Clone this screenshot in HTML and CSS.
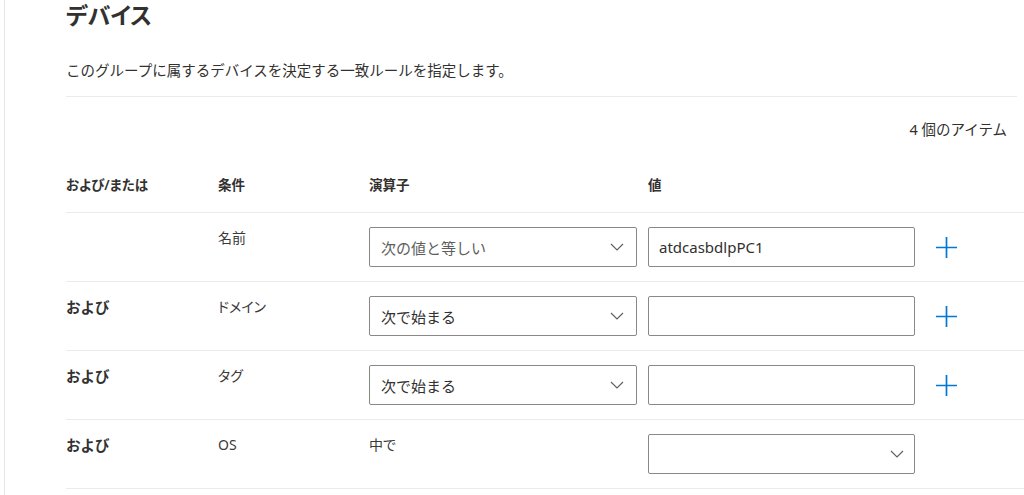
FILE: index.html
```html
<!DOCTYPE html>
<html lang="ja">
<head>
<meta charset="utf-8">
<title>デバイス</title>
<link rel="stylesheet" href="styles.css">
</head>
<body>
<div class="page">
  <h1 class="title">デバイス</h1>
  <p class="desc">このグループに属するデバイスを決定する一致ルールを指定します。</p>
  <div class="count">4 個のアイテム</div>
  <div class="table">
    <div class="row head">
      <div>および/または</div>
      <div>条件</div>
      <div>演算子</div>
      <div>値</div>
      <div></div>
    </div>
    <div class="row">
      <div class="andor"></div>
      <div class="label">名前</div>
      <div class="cell"><div class="select op placeholder"><span>次の値と等しい</span><svg class="chev" viewBox="0 0 14 8"><path d="M1 1 L7 7 L13 1"/></svg></div></div>
      <div class="cell"><div class="input">atdcasbdlpPC1</div></div>
      <div class="cell"><svg class="plus" viewBox="0 0 22 22"><path d="M11 0 V22 M0 11 H22"/></svg></div>
    </div>
    <div class="row">
      <div class="andor">および</div>
      <div class="label">ドメイン</div>
      <div class="cell"><div class="select op"><span>次で始まる</span><svg class="chev" viewBox="0 0 14 8"><path d="M1 1 L7 7 L13 1"/></svg></div></div>
      <div class="cell"><div class="input"></div></div>
      <div class="cell"><svg class="plus" viewBox="0 0 22 22"><path d="M11 0 V22 M0 11 H22"/></svg></div>
    </div>
    <div class="row">
      <div class="andor">および</div>
      <div class="label">タグ</div>
      <div class="cell"><div class="select op"><span>次で始まる</span><svg class="chev" viewBox="0 0 14 8"><path d="M1 1 L7 7 L13 1"/></svg></div></div>
      <div class="cell"><div class="input"></div></div>
      <div class="cell"><svg class="plus" viewBox="0 0 22 22"><path d="M11 0 V22 M0 11 H22"/></svg></div>
    </div>
    <div class="row">
      <div class="andor">および</div>
      <div class="label">OS</div>
      <div class="label">中で</div>
      <div class="cell"><div class="select val"><span></span><svg class="chev" viewBox="0 0 14 8"><path d="M1 1 L7 7 L13 1"/></svg></div></div>
      <div></div>
    </div>
  </div>
</div>
</body>
</html>
```

FILE: styles.css
```css
html, body {
  margin: 0;
  padding: 0;
  background: #ffffff;
}
body {
  font-family: "Noto Sans", "Noto Sans CJK JP", sans-serif;
  color: #323130;
  font-size: 14px;
  overflow: hidden;
}
.page {
  margin-left: 4px;
  border-left: 1px solid #e6e6e6;
  padding-left: 61px;
  padding-right: 7px;
  height: 495px;
  box-sizing: border-box;
}
.title {
  margin: 0;
  font-size: 23px;
  line-height: 30px;
  font-weight: 600;
  font-feature-settings: "palt";
  color: #323130;
}
.desc {
  margin: 30px 0 0;
  font-size: 14.5px;
  line-height: 20px;
  padding-bottom: 16px;
  border-bottom: 1px solid #edebe9;
  color: #323130;
}
.count {
  text-align: right;
  padding-right: 10px;
  margin-top: 22px;
  line-height: 20px;
  font-size: 14.5px;
}
.table {
  margin-top: 36px;
  margin-right: -7px;
}
.row {
  display: grid;
  grid-template-columns: 152px 151px 279px 288px 1fr;
  height: 69px;
  box-sizing: border-box;
  border-bottom: 1px solid #edebe9;
}
.row.head {
  height: 38px;
  font-weight: 600;
  line-height: 20px;
  font-size: 13.5px;
  font-feature-settings: "palt";
}
.andor {
  font-weight: 700;
  padding-top: 15px;
  line-height: 20px;
  font-size: 14.5px;
}
.label {
  padding-top: 15px;
  line-height: 20px;
  color: #3b3a39;
  font-feature-settings: "palt";
}
.cell {
  display: flex;
  align-items: center;
}
.select, .input {
  height: 40px;
  box-sizing: border-box;
  border: 1px solid #8a8886;
  border-radius: 2px;
  display: flex;
  align-items: center;
  font-size: 15px;
  color: #323130;
}
.select {
  justify-content: space-between;
  padding: 0 12px 0 11px;
}
.select.op { width: 268px; }
.select.val { width: 267px; padding-right: 10px; }
.select.placeholder { color: #605e5c; }
.input {
  width: 267px;
  padding: 0 10px;
}
.chev {
  width: 14px;
  height: 8px;
  fill: none;
  stroke: #605e5c;
  stroke-width: 1.1;
}
.plus {
  width: 21px;
  height: 21px;
  fill: none;
  stroke: #0078d4;
  stroke-width: 1.8;
}
```
